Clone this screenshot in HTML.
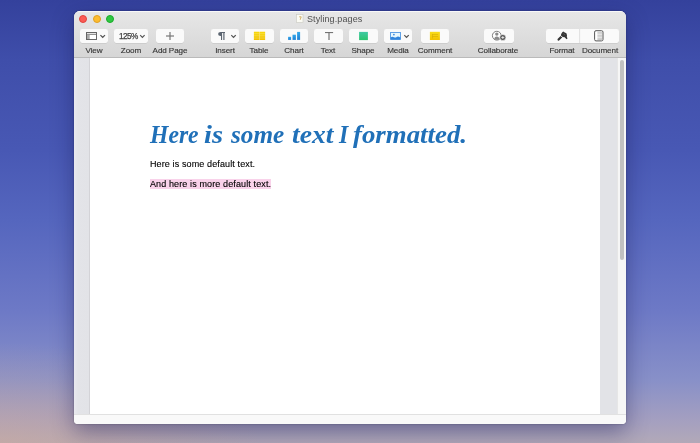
<!DOCTYPE html>
<html><head><meta charset="utf-8">
<style>
*{margin:0;padding:0;box-sizing:border-box}
html,body{width:700px;height:443px;overflow:hidden}
body{position:relative;font-family:"Liberation Sans",sans-serif;
background:radial-gradient(ellipse 260px 100px at 0px 443px,rgba(210,170,150,.5),rgba(210,170,150,0)),linear-gradient(to bottom,#34419c 0px,#3f4eaa 60px,#4858b4 150px,#5566be 220px,#6d79c6 310px,#8890c8 380px,#a49fc0 420px,#b2a9b8 443px);}
#shadow{position:absolute;left:74px;top:11px;width:552px;height:413px;border-radius:6px 6px 4px 4px;
box-shadow:0 8px 22px rgba(25,25,80,.42),0 0 2px rgba(0,0,0,.35)}
#win{position:absolute;left:74px;top:11px;width:552px;height:413px;border-radius:6px 6px 4px 4px;overflow:hidden;background:#f8f8f8}
#tb{position:absolute;left:0;top:0;width:552px;height:47px;background:linear-gradient(#e7e7e7,#d6d6d6);border-bottom:1px solid #bababa;box-shadow:inset 0 1px 0 rgba(255,255,255,.7)}
.light{position:absolute;top:3.7px;width:8.4px;height:8.4px;border-radius:50%}
.btn{position:absolute;top:29px;height:14px;background:#fafafa;border-radius:2.2px;box-shadow:0 0.5px 0.5px rgba(0,0,0,.13)}
.lbl{position:absolute;top:45.7px;font-size:8.1px;letter-spacing:-0.1px;color:#363636;-webkit-text-stroke:0.15px #363636;will-change:transform;text-align:center;white-space:nowrap}
#title{position:absolute;left:307.3px;top:13.6px;font-size:9px;letter-spacing:0.1px;color:#505050;white-space:nowrap;will-change:transform}
#content{position:absolute;left:0;top:47px;width:552px;height:356px;background:linear-gradient(to right,#e9e9ef 0,#e3e4e8 4px,#e2e3e7 14.5px,#d3d3d7 15px,#d3d3d7 16px,#e2e3e7 16px)}
#page{position:absolute;left:16px;top:0;width:510px;height:356px;background:#fff}
#scroll{position:absolute;left:542.5px;top:0;width:9.5px;height:356px;background:#f6f6f6;border-left:0.5px solid #e6e6e6}
#thumb{position:absolute;left:2.2px;top:2.3px;width:4.8px;height:200px;background:#c1c1c1;border-radius:3px}
#bottom{position:absolute;left:0;top:403px;width:552px;height:10px;background:#f9f9f9;border-top:1px solid #e1e1e1}
.hw{position:absolute;top:120px;transform-origin:0 0;font-family:"Liberation Serif",serif;font-style:italic;font-weight:bold;font-size:25.5px;line-height:normal;color:#2070b8;white-space:nowrap}
.p{position:absolute;left:150px;font-size:9px;letter-spacing:0.12px;color:#000;-webkit-text-stroke:0.12px #000;will-change:transform;white-space:nowrap;line-height:10px}
svg{position:absolute;left:0;top:0}
</style></head><body>
<div id="shadow"></div>
<div id="win">
  <div id="tb">
    <div class="light" style="left:5.1px;background:#fc5b55;border:0.5px solid #e0443e"></div>
    <div class="light" style="left:18.6px;background:#fdbc2f;border:0.5px solid #dfa023"></div>
    <div class="light" style="left:31.8px;background:#2fc742;border:0.5px solid #1aab29"></div>
  </div>
  <div id="content">
    <div id="page"></div>
    <div id="scroll"><div id="thumb"></div></div>
  </div>
  <div id="bottom"></div>
</div>
<div id="title">Styling.pages</div>
<!-- buttons (body coords) -->
<div class="btn" style="left:80px;width:28.4px"></div>
<div class="btn" style="left:114.2px;width:33.6px"></div>
<div class="btn" style="left:155.5px;width:28.6px"></div>
<div class="btn" style="left:210.8px;width:28.3px"></div>
<div class="btn" style="left:245px;width:28.6px"></div>
<div class="btn" style="left:279.8px;width:28.6px"></div>
<div class="btn" style="left:314.3px;width:28.8px"></div>
<div class="btn" style="left:349.1px;width:28.5px"></div>
<div class="btn" style="left:383.8px;width:28.6px"></div>
<div class="btn" style="left:420.9px;width:28.3px"></div>
<div class="btn" style="left:483.6px;width:30.6px"></div>
<div class="btn" style="left:546px;width:73px"></div>
<div class="lbl" style="left:74px;width:40px">View</div>
<div class="lbl" style="left:111px;width:40px">Zoom</div>
<div class="lbl" style="left:150px;width:40px">Add Page</div>
<div class="lbl" style="left:205px;width:40px">Insert</div>
<div class="lbl" style="left:239px;width:40px">Table</div>
<div class="lbl" style="left:274px;width:40px">Chart</div>
<div class="lbl" style="left:308px;width:40px">Text</div>
<div class="lbl" style="left:343px;width:40px">Shape</div>
<div class="lbl" style="left:378px;width:40px">Media</div>
<div class="lbl" style="left:415px;width:40px">Comment</div>
<div class="lbl" style="left:473px;width:50px">Collaborate</div>
<div class="lbl" style="left:542px;width:40px">Format</div>
<div class="lbl" style="left:580px;width:40px">Document</div>
<svg width="700" height="443" viewBox="0 0 700 443">
  <!-- divider format/doc -->
  <line x1="579.6" y1="29" x2="579.6" y2="43" stroke="#d9d9d9" stroke-width="0.8"/>
  <!-- doc icon title -->
  <rect x="296.5" y="14.5" width="6.5" height="8" fill="#fbfbf4" stroke="#c8c8c0" stroke-width="0.6"/>
  <path d="M299.2 16.8 l2 0 l-1 3" stroke="#c09030" stroke-width="0.7" fill="none"/>
  <!-- view icon -->
  <rect x="86.5" y="32.5" width="10" height="7" fill="#fff" stroke="#666" stroke-width="1"/>
  <line x1="86.5" y1="34.3" x2="96.5" y2="34.3" stroke="#666" stroke-width="0.9"/>
  <rect x="87" y="34.8" width="2.7" height="4.2" fill="#a9a9a9"/>
  <polyline points="100.4,35.1 102.7,37.3 105,35.1" fill="none" stroke="#555" stroke-width="1.2"/>
  <!-- zoom chevron -->
  <polyline points="140.2,35.1 142.4,37.3 144.6,35.1" fill="none" stroke="#555" stroke-width="1.2"/>
  <!-- plus -->
  <line x1="166" y1="36" x2="174" y2="36" stroke="#777" stroke-width="1.2"/>
  <line x1="170" y1="32.1" x2="170" y2="39.9" stroke="#777" stroke-width="1.2"/>
  <!-- pilcrow -->
  <path d="M225 31.9 H220.6 A2.5 2 0 0 0 220.6 35.9 H221 V39.9 H222.1 V33 H223.3 V39.9 H224.5 V33 H225 Z" fill="#5b6571"/>
  <!-- insert chevron -->
  <polyline points="231.3,35.1 233.5,37.3 235.8,35.1" fill="none" stroke="#555" stroke-width="1.2"/>
  <!-- table -->
  <defs>
    <linearGradient id="yel" x1="0" y1="0" x2="0" y2="1"><stop offset="0" stop-color="#f8dc1a"/><stop offset="1" stop-color="#f2c200"/></linearGradient>
    <linearGradient id="grn" x1="0" y1="0" x2="0" y2="1"><stop offset="0" stop-color="#40c9a4"/><stop offset="1" stop-color="#2ac46e"/></linearGradient>
    <linearGradient id="blu" x1="0" y1="0" x2="0" y2="1"><stop offset="0" stop-color="#35a9ea"/><stop offset="1" stop-color="#1c7fd4"/></linearGradient>
  </defs>
  <rect x="253.9" y="31.8" width="11.2" height="8.2" fill="#f9e486"/><rect x="253.9" y="31.8" width="5.3" height="1.85" fill="#f7d60a"/><rect x="259.8" y="31.8" width="5.3" height="1.85" fill="#f7d60a"/><rect x="253.9" y="34.05" width="5.3" height="1.7" fill="#f6d20c"/><rect x="259.8" y="34.05" width="5.3" height="1.7" fill="#f6d20c"/><rect x="253.9" y="36.15" width="5.3" height="1.7" fill="#f4ca06"/><rect x="259.8" y="36.15" width="5.3" height="1.7" fill="#f4ca06"/><rect x="253.9" y="38.25" width="5.3" height="1.75" fill="#f2c200"/><rect x="259.8" y="38.25" width="5.3" height="1.75" fill="#f2c200"/>
  <!-- chart -->
  <rect x="288.1" y="36.8" width="3" height="3.1" fill="url(#blu)"/>
  <rect x="292.5" y="34.7" width="3.4" height="5.2" fill="url(#blu)"/>
  <rect x="297.1" y="31.9" width="3" height="8" fill="url(#blu)"/>
  <!-- text T -->
  <line x1="325" y1="32.6" x2="333.1" y2="32.6" stroke="#666" stroke-width="1"/>
  <line x1="329" y1="32.6" x2="329" y2="39.9" stroke="#666" stroke-width="1.1"/>
  <!-- shape -->
  <rect x="359.1" y="31.9" width="8.8" height="8.2" fill="url(#grn)"/>
  <!-- media -->
  <rect x="390.6" y="32.5" width="9.8" height="7" fill="#e8f7fd" stroke="#3d8ade" stroke-width="0.8"/>
  <circle cx="393.9" cy="34.6" r="0.9" fill="#3d8ade"/>
  <path d="M390.6 37.4 Q392.2 36.3 394 37.2 Q395.6 38 396.6 37 Q397.9 35.6 400.4 37.4 V39.5 H390.6 Z" fill="#2f84dc"/>
  <polyline points="404.3,35.1 406.5,37.3 408.8,35.1" fill="none" stroke="#555" stroke-width="1.2"/>
  <!-- comment -->
  <rect x="429.9" y="31.8" width="10" height="8.2" fill="url(#yel)"/>
  <path d="M432 34.5 L438 34.5 M432 36.5 L438 36.5 M432.5 34 L432.5 38.5" stroke="#c9a000" stroke-width="0.6" opacity="0.7"/>
  <!-- collaborate -->
  <circle cx="496.8" cy="35.7" r="4.4" fill="#fff" stroke="#707070" stroke-width="0.9"/>
  <circle cx="496.8" cy="34.1" r="1.7" fill="#8a8a8a"/>
  <path d="M494.2 39.7 Q494.3 36.6 496.8 36.6 Q499.3 36.6 499.4 39.7 Z" fill="#8a8a8a"/>
  <circle cx="502.8" cy="37.5" r="3.1" fill="#5e5e5e" stroke="#fafafa" stroke-width="0.6"/>
  <path d="M501.3 37.5 H504.3 M502.8 36 V39" stroke="#fff" stroke-width="0.7"/>
  <!-- format brush -->
  <path d="M563.2 31.4 L564.8 32.5 L566.4 33.3 L567 35.2 L566.8 36.8 L567.5 38.4 L566.5 39.3 L565.6 38.2 L564.7 37.3 L562.6 37 L560.9 35.3 L561.2 34 L562.3 32.3 Z" fill="#363636"/>
  <path d="M558.6 39.6 L561.6 36.4" stroke="#363636" stroke-width="2.2" stroke-linecap="round"/>
  <path d="M560.1 35.3 L562.9 37.6" stroke="#fafafa" stroke-width="0.8"/>
  <path d="M563.4 33.4 L564.8 35" stroke="#6a6a6a" stroke-width="0.6"/>
  <!-- document -->
  <rect x="594.6" y="30.7" width="8.4" height="10.2" rx="1.4" fill="#fff" stroke="#555" stroke-width="1"/>
  <path d="M597.4 32.3 H602.4 M597.4 33.8 H602.4 M597.4 35.3 H602.4 M597.4 36.8 H602.4 M597.4 38.3 H602.4 M597.4 39.6 H602.4" stroke="#9a9a9a" stroke-width="0.6"/>
</svg>
<div class="lbl" style="left:119px;top:32px;text-align:left;font-size:8.2px;color:#404040;-webkit-text-stroke:0.25px #404040;letter-spacing:-0.55px">125%</div>

<span class="hw" style="left:150.1px;transform:scaleX(0.927)">Here</span><span class="hw" style="left:204.3px;transform:scaleX(1.113)">is</span><span class="hw" style="left:231.0px;transform:scaleX(0.987)">some</span><span class="hw" style="left:291.5px;transform:scaleX(1.082)">text</span><span class="hw" style="left:338.9px;transform:scaleX(0.927)">I</span><span class="hw" style="left:353.1px;transform:scaleX(1.052)">formatted.</span>
<div class="p" style="top:159px">Here is some default text.</div>
<div class="p" style="top:179px;background:#f9d2ea;width:121px">And here is more default text.</div>
</body></html>
